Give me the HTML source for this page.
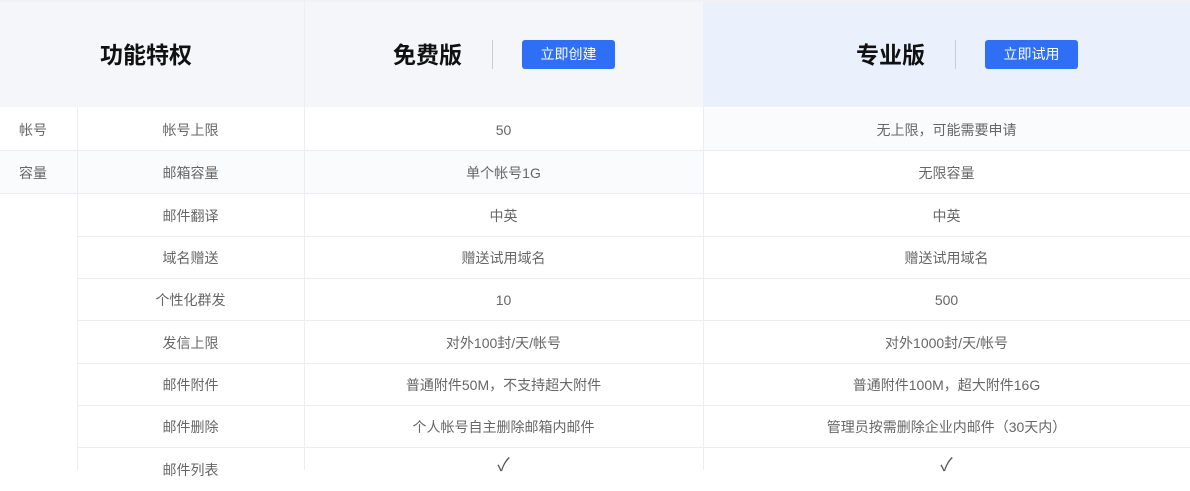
<!DOCTYPE html>
<html><head><meta charset="utf-8"><style>
*{margin:0;padding:0;box-sizing:border-box}
body{width:1190px;height:470px;overflow:hidden;background:#fff;font-family:"Liberation Sans","Noto Sans CJK SC",sans-serif;position:relative;color:#666;font-size:14px}
.abs{position:absolute}
.hl{position:absolute;height:1px;background:#ebedf0}
.vl{position:absolute;width:1px;background:#ebedf0}
.c{position:absolute;text-align:center;line-height:42px;height:42px}
.t{font-size:23px;font-weight:bold;color:#111;position:absolute;top:40px;line-height:30px}
.btn{position:absolute;top:40px;height:29px;width:93px;background:#2f6ff6;border-radius:3px;color:#fff;font-size:14px;line-height:29px;text-align:center}
.dv{position:absolute;top:40px;height:29px;width:1px;background:#ccc}
.ck{font-size:18px;color:#555}
</style></head><body>
<div class="abs" style="left:0;top:0;width:703px;height:107px;background:#f5f6fa"></div>
<div class="abs" style="left:703px;top:0;width:487px;height:107px;background:#eaf1fd"></div>
<div class="abs" style="left:0;top:0;width:1190px;height:2px;background:#f1f2f4"></div>
<div class="vl" style="left:304px;top:0;height:107px;background:#eceef2"></div>
<div class="abs" style="left:0;top:150px;width:1190px;height:43px;background:#fafbfc"></div>
<div class="abs" style="left:703px;top:108px;width:487px;height:42px;background:#fafbfd"></div>
<div class="abs" style="left:703px;top:150px;width:487px;height:43px;background:#fff"></div>

<div class="t" style="left:100px">功能特权</div>
<div class="t" style="left:393px">免费版</div>
<div class="dv" style="left:492px"></div>
<div class="btn" style="left:522px">立即创建</div>
<div class="t" style="left:856px">专业版</div>
<div class="dv" style="left:955px"></div>
<div class="btn" style="left:985px">立即试用</div>

<div class="vl" style="left:77px;top:107px;height:363px"></div>
<div class="vl" style="left:304px;top:107px;height:363px"></div>
<div class="vl" style="left:703px;top:107px;height:363px"></div>
<div class="hl" style="left:0;top:150px;width:1190px"></div>
<div class="hl" style="left:0;top:193px;width:1190px"></div>
<div class="hl" style="left:77px;top:236px;width:1113px"></div>
<div class="hl" style="left:77px;top:278px;width:1113px"></div>
<div class="hl" style="left:77px;top:320px;width:1113px"></div>
<div class="hl" style="left:77px;top:363px;width:1113px"></div>
<div class="hl" style="left:77px;top:405px;width:1113px"></div>
<div class="hl" style="left:77px;top:447px;width:1113px"></div>

<div class="c" style="left:0;width:66px;top:109px">帐号</div>
<div class="c" style="left:0;width:66px;top:152px">容量</div>

<div class="c" style="left:77px;width:227px;top:109px">帐号上限</div>
<div class="c" style="left:77px;width:227px;top:152px">邮箱容量</div>
<div class="c" style="left:77px;width:227px;top:195px">邮件翻译</div>
<div class="c" style="left:77px;width:227px;top:237px">域名赠送</div>
<div class="c" style="left:77px;width:227px;top:279px">个性化群发</div>
<div class="c" style="left:77px;width:227px;top:322px">发信上限</div>
<div class="c" style="left:77px;width:227px;top:364px">邮件附件</div>
<div class="c" style="left:77px;width:227px;top:406px">邮件删除</div>
<div class="c" style="left:77px;width:227px;top:449px">邮件列表</div>

<div class="c" style="left:304px;width:399px;top:109px">50</div>
<div class="c" style="left:304px;width:399px;top:152px">单个帐号1G</div>
<div class="c" style="left:304px;width:399px;top:195px">中英</div>
<div class="c" style="left:304px;width:399px;top:237px">赠送试用域名</div>
<div class="c" style="left:304px;width:399px;top:279px">10</div>
<div class="c" style="left:304px;width:399px;top:322px">对外100封/天/帐号</div>
<div class="c" style="left:304px;width:399px;top:364px">普通附件50M，不支持超大附件</div>
<div class="c" style="left:304px;width:399px;top:406px">个人帐号自主删除邮箱内邮件</div>
<div class="c ck" style="left:304px;width:399px;top:444px">✓</div>

<div class="c" style="left:703px;width:487px;top:109px">无上限，可能需要申请</div>
<div class="c" style="left:703px;width:487px;top:152px">无限容量</div>
<div class="c" style="left:703px;width:487px;top:195px">中英</div>
<div class="c" style="left:703px;width:487px;top:237px">赠送试用域名</div>
<div class="c" style="left:703px;width:487px;top:279px">500</div>
<div class="c" style="left:703px;width:487px;top:322px">对外1000封/天/帐号</div>
<div class="c" style="left:703px;width:487px;top:364px">普通附件100M，超大附件16G</div>
<div class="c" style="left:703px;width:487px;top:406px">管理员按需删除企业内邮件（30天内）</div>
<div class="c ck" style="left:703px;width:487px;top:444px">✓</div>
</body></html>
